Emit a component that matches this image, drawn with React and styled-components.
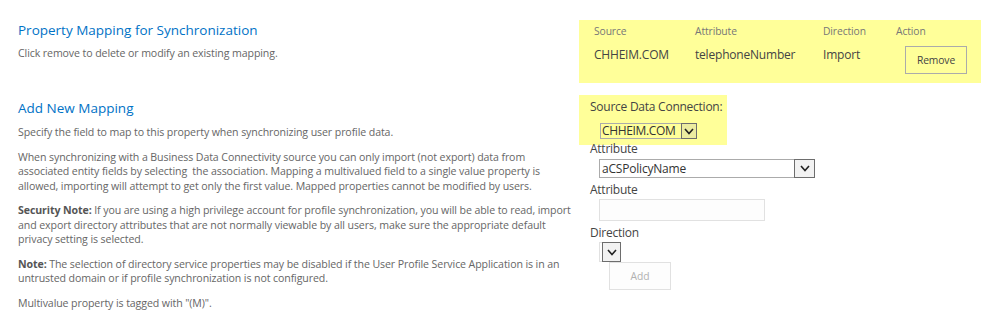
import React from "react";
import styled, { createGlobalStyle } from "styled-components";

const GlobalStyle = createGlobalStyle`
	body {
		margin: 0;
		background: #fff;
		font-family: "Open Sans", "Noto Sans", sans-serif;
	}
`;

const Page = styled.div`
	width: 998px;
	height: 336px;
	padding-top: 20px;
	box-sizing: border-box;
	overflow: hidden;
`;

const Section = styled.div`
	display: grid;
	grid-template-columns: 579px 402px;
	margin-bottom: ${(p) => p.$gap || 0}px;
`;

const Info = styled.div`
	padding-left: 18px;
	padding-top: ${(p) => p.$top || 0}px;
	color: #666;
	font-size: 10.6px;
	letter-spacing: -0.1px;
	line-height: 14.5px;
	white-space: nowrap;
`;

const Title = styled.h3`
	margin: 0;
	font-weight: 400;
	font-size: 13.5px;
	letter-spacing: 0;
	line-height: 20px;
	color: #0072c6;
`;

const Para = styled.p`
	margin: ${(p) => p.$mt || 10}px 0 0;
	b {
		font-weight: 700;
		color: #555;
	}
`;

const MappingGrid = styled.div`
	background: #ffff99;
	display: grid;
	grid-template-columns: 116px 128px 73px 85px;
	grid-template-rows: 26px 37px;
	height: 63px;
`;

const HeadCell = styled.div`
	font-size: 10.3px;
	letter-spacing: -0.1px;
	color: #777;
	line-height: 14px;
	padding-top: 4px;
	padding-left: ${(p) => p.$pl || 0}px;
`;

const ValueCell = styled.div`
	font-size: 12px;
	letter-spacing: -0.2px;
	color: #444;
	line-height: 16px;
	padding-top: 1px;
	padding-left: ${(p) => p.$pl || 0}px;
`;

const Button = styled.button`
	width: 62px;
	height: 28px;
	font-family: inherit;
	font-size: 10.3px;
	letter-spacing: -0.1px;
	background: ${(p) => (p.disabled ? "#fdfdfd" : "transparent")};
	color: ${(p) => (p.disabled ? "#b1b1b1" : "#444")};
	border: 1px solid ${(p) => (p.disabled ? "#e1e1e1" : "#ababab")};
	margin: ${(p) => p.$m || "0"};
	padding: 0;
	display: block;
`;

const Form = styled.div`
	display: flex;
	flex-direction: column;
	align-items: flex-start;
`;

const Highlight = styled.div`
	background: #ffff99;
	width: 148px;
	height: 50px;
	box-sizing: border-box;
	padding-top: 4px;
`;

const Label = styled.div`
	font-size: 12px;
	letter-spacing: -0.25px;
	line-height: 16px;
	color: #444;
	padding-left: 11px;
	margin-top: ${(p) => p.$mt || 0}px;
	white-space: nowrap;
`;

const Select = styled.div`
	display: flex;
	align-items: stretch;
	width: ${(p) => p.$w}px;
	height: ${(p) => p.$h}px;
	margin-left: ${(p) => p.$ml || 20}px;
	margin-top: ${(p) => p.$mt || 0}px;
	border: 1px solid ${(p) => p.$border || "#ababab"};
	border-right: none;
	background: ${(p) => p.$bg || "#fff"};
	box-sizing: border-box;
`;

const SelectText = styled.div`
	flex: 1;
	min-width: 0;
	font-size: 12px;
	letter-spacing: ${(p) => p.$ls || -0.2}px;
	line-height: ${(p) => p.$lh}px;
	color: #333;
	padding-left: ${(p) => p.$pl ?? 2}px;
	white-space: nowrap;
`;

const Arrow = styled.div`
	flex-shrink: 0;
	width: ${(p) => p.$w}px;
	margin: -1px 0;
	border: 1px solid #6d6d6d;
	background: ${(p) => p.$bg || "#f2f2f2"};
	box-sizing: border-box;
	display: flex;
	align-items: center;
	justify-content: center;
`;

const TextInput = styled.div`
	width: 166px;
	height: 22px;
	margin-left: 20px;
	margin-top: 1px;
	border: 1px solid #e1e1e1;
	background: #fdfdfd;
	box-sizing: border-box;
`;

const Chevron = () => (
	<svg width="10" height="7" viewBox="0 0 10 7">
		<polyline points="1,1 5,5.5 9,1" fill="none" stroke="#222" strokeWidth="1.6" />
	</svg>
);

const App = () => {
	return (
		<Page>
			<GlobalStyle />
			<Section $gap={12}>
				<Info>
					<Title>Property Mapping for Synchronization</Title>
					<Para $mt={6}>Click remove to delete or modify an existing mapping.</Para>
				</Info>
				<MappingGrid>
					<HeadCell $pl={15}>Source</HeadCell>
					<HeadCell>Attribute</HeadCell>
					<HeadCell>Direction</HeadCell>
					<HeadCell>Action</HeadCell>
					<ValueCell $pl={15}>CHHEIM.COM</ValueCell>
					<ValueCell>telephoneNumber</ValueCell>
					<ValueCell>Import</ValueCell>
					<div>
						<Button $m="0 0 0 9px">Remove</Button>
					</div>
				</MappingGrid>
			</Section>
			<Section>
				<Info $top={3}>
					<Title>Add New Mapping</Title>
					<Para $mt={7}>
						Specify the field to map to this property when synchronizing user profile data.
					</Para>
					<Para>
						When synchronizing with a Business Data Connectivity source you can only import (not export) data from
						<br />
						associated entity fields by selecting&nbsp; the association. Mapping a multivalued field to a single value property is
						<br />
						allowed, importing will attempt to get only the first value. Mapped properties cannot be modified by users.
					</Para>
					<Para>
						<b>Security Note:</b> If you are using a high privilege account for profile synchronization, you will be able to read, import
						<br />
						and export directory attributes that are not normally viewable by all users, make sure the appropriate default
						<br />
						privacy setting is selected.
					</Para>
					<Para>
						<b>Note:</b> The selection of directory service properties may be disabled if the User Profile Service Application is in an
						<br />
						untrusted domain or if profile synchronization is not configured.
					</Para>
					<Para>Multivalue property is tagged with "(M)".</Para>
				</Info>
				<Form>
					<Highlight>
						<Label>Source Data Connection:</Label>
						<Select $w={97} $h={16} $ml={21} $mt={8} $bg="transparent">
							<SelectText $lh={14} $ls={-0.35} $pl={1}>CHHEIM.COM</SelectText>
							<Arrow $w={16} $bg="#ececa0">
								<Chevron />
							</Arrow>
						</Select>
					</Highlight>
					<Label $mt={-4}>Attribute</Label>
					<Select $w={216} $h={19} $mt={2}>
						<SelectText $lh={17}>aCSPolicyName</SelectText>
						<Arrow $w={21}>
							<Chevron />
						</Arrow>
					</Select>
					<Label $mt={4}>Attribute</Label>
					<TextInput />
					<Label $mt={4}>Direction</Label>
					<Select $w={22} $h={20} $mt={1} $border="#e1e1e1">
						<SelectText $lh={18} />
						<Arrow $w={19}>
							<Chevron />
						</Arrow>
					</Select>
					<Button disabled $m="0 0 0 30px">Add</Button>
				</Form>
			</Section>
		</Page>
	);
};

export default App;
